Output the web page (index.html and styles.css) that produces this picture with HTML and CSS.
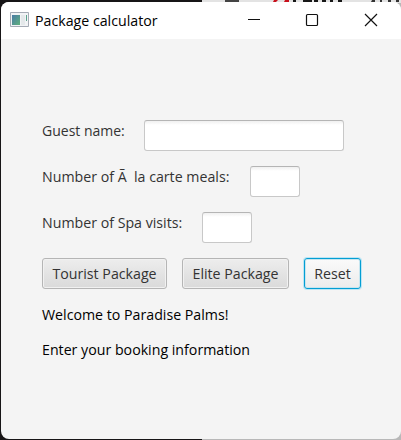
FILE: index.html
```html
<!DOCTYPE html>
<html lang="en">
<head>
<meta charset="utf-8">
<title>Package calculator</title>
<link rel="stylesheet" href="styles.css">
</head>
<body>
<svg class="backdrop" width="401" height="440" aria-hidden="true">
  <path fill="#171516" d="M0 0h202v440H0z"/>
  <path fill="#e3e3e3" d="M202 0h199v3H202z"/>
  <path fill="#b8b8b8" d="M202 3h199v437H202z"/>
  <path fill="#444" d="M225 0h14v2h-14z"/>
  <path fill="#c8101c" d="M274 0h4l-2 2h-3zM285 0h4v2h-5z"/>
  <path fill="#171717" d="M293 0h3v2h-3zM303 0h9v2h-9zM314 0h4v2h-4zM322 0h4v2h-4zM330 0h3v2h-3zM338 0h4v2h-4z"/>
  <path fill="#333" d="M372 0h3v2h-4zM380 0h2v2h-2zM388 0h3v2h-3zM396 0h3v2h-3z"/>
</svg>
<main class="window">
  <header class="titlebar">
    <svg class="app-icon" width="19" height="16" viewBox="0 0 19 16">
      <defs><linearGradient id="g" x1="0" y1="0" x2="1" y2="1"><stop stop-color="#4a7ba6"/><stop offset="1" stop-color="#5eb07c"/></linearGradient></defs>
      <path fill="#f1f3f5" stroke="#a5abb5" d="M.5.5h18v14H.5z"/>
      <path fill="url(#g)" d="M2 3h8v10H2z"/>
      <path fill="#e4e8ea" d="M11 3h4v10h-4z"/>
      <path fill="#5aa28c" d="M16 3h1v6h-1z"/>
    </svg>
    <h1 class="title">Package calculator</h1>
    <svg class="controls" width="140" height="20" viewBox="0 0 140 20" fill="none" stroke="#111" stroke-width="1.2">
      <path d="M8 9.5h12"/>
      <rect x="66.5" y="4.5" width="11" height="11" rx="1"/>
      <path d="M125 4l12 12M137 4l-12 12"/>
    </svg>
  </header>
  <form class="form">
    <label class="row"><span class="t-guest">Guest name:</span><input class="field wide" type="text"></label>
    <label class="row"><span class="t-meals">Number of Ã&nbsp; la carte meals:</span><input class="field" type="text"></label>
    <label class="row"><span class="t-spa">Number of Spa visits:</span><input class="field" type="text"></label>
    <div class="buttons">
      <button class="btn tourist" type="button">Tourist Package</button>
      <button class="btn elite" type="button">Elite Package</button>
      <button class="btn reset" type="button">Reset</button>
    </div>
    <p class="message">Welcome to Paradise Palms!</p>
    <p class="message">Enter your booking information</p>
  </form>
</main>
</body>
</html>
```
FILE: styles.css
```css
* { box-sizing: border-box; }
body { margin: 0; width: 401px; height: 440px; overflow: hidden; padding: 2px 0 1px 1px; font: 14.2px/20px "Open Sans", "Noto Sans", sans-serif; color: #333; }
.backdrop { position: absolute; left: 0; top: 0; z-index: -1; }
.window { height: 437px; background: #f4f4f4; border-radius: 8px; overflow: hidden; }
.titlebar { height: 37px; background: #fff; display: flex; align-items: center; padding-left: 9px; color: #000; }
.app-icon { margin-top: -1px; }
.title { margin: 0 0 0 6px; width: 125px; font: inherit; white-space: nowrap; }
.controls { margin: -2px 0 0 80px; }
.form { padding: 81px 0 0 41px; }
.row { display: flex; height: 31px; margin-bottom: 15px; gap: 19px; white-space: nowrap; }
.row span { display: block; padding-top: 1px; }
.field { width: 50px; height: 31px; padding: 4px 7px; border: 1px solid #c8c8c8; border-top-color: #b5b5b5; border-radius: 3px; background: linear-gradient(#f0f0f0, #fff 4px); outline: none; }
.wide { width: 200px; }
.t-guest { width: 83px; font-size: 14px; }
.t-meals { width: 189px; }
.t-spa { width: 141px; }
.buttons { display: flex; gap: 15px; }
.btn { height: 31px; padding: 0; border: 1px solid #b5b5b5; border-radius: 3px; background: linear-gradient(#ededed, #dadada); box-shadow: inset 0 0 0 1px #f1f1f1; color: #333; font: inherit; white-space: nowrap; }
.tourist { width: 125px; }
.elite { width: 107px; }
.reset { width: 57px; border-color: #039ed3; background: linear-gradient(#fafafa, #ececec); box-shadow: 0 0 0 1px #bce5f4, inset 0 0 0 1px #c7e5ef; }
.message { margin: 15px 0 0; padding-top: 1px; height: 20px; color: #000; white-space: nowrap; }
```
